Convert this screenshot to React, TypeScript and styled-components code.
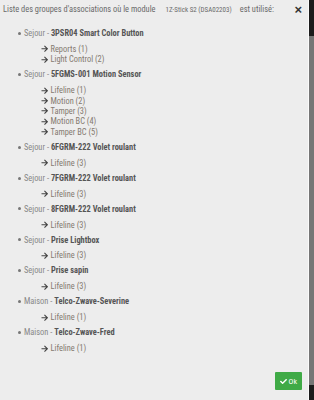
import React from "react";
import styled, { createGlobalStyle } from "styled-components";
import { FaArrowRight, FaCheck } from "react-icons/fa";

const Details = {
    Title: "Liste des groupes d'associations où le module",
    Module: "1Z-Stick S2 (DSA02203)",
    Suffix: "est utilisé:",
    Groups: [
        { Room: "Sejour", Name: "3PSR04 Smart Color Button", Links: ["Reports (1)", "Light Control (2)"] },
        { Room: "Sejour", Name: "5FGMS-001 Motion Sensor", Links: ["Lifeline (1)", "Motion (2)", "Tamper (3)", "Motion BC (4)", "Tamper BC (5)"] },
        { Room: "Sejour", Name: "6FGRM-222 Volet roulant", Links: ["Lifeline (3)"] },
        { Room: "Sejour", Name: "7FGRM-222 Volet roulant", Links: ["Lifeline (3)"] },
        { Room: "Sejour", Name: "8FGRM-222 Volet roulant", Links: ["Lifeline (3)"] },
        { Room: "Sejour", Name: "Prise Lightbox", Links: ["Lifeline (3)"] },
        { Room: "Sejour", Name: "Prise sapin", Links: ["Lifeline (3)"] },
        { Room: "Maison", Name: "Telco-Zwave-Severine", Links: ["Lifeline (1)"] },
        { Room: "Maison", Name: "Telco-Zwave-Fred", Links: ["Lifeline (1)"] },
    ],
};

const GlobalStyle = createGlobalStyle`
    html, body {
        margin: 0;
        padding: 0;
        background: #222;
    }
    body {
        font-family: "Roboto Condensed", "Liberation Sans Narrow", "DejaVu Sans Condensed", Roboto, sans-serif;
    }
`;

const Page = styled.div`
    display: flex;
    flex-direction: row;
    width: 314px;
    height: 400px;
    overflow: hidden;
`;

const Dialog = styled.div`
    flex: 1;
    display: flex;
    flex-direction: column;
    background-color: #ededed;
    border-right: 1px solid #fafafa;
`;

const Header = styled.div`
    display: flex;
    align-items: center;
    padding: 3px 6px 3px 3px;
    height: 12px;
    font-size: 8.4px;
    color: #6a6a6a;
`;

const Title = styled.span`
    white-space: nowrap;
`;

const Module = styled.span`
    font-size: 7px;
    margin: 0 8px 0 10px;
`;

const Close = styled.span`
    margin-left: auto;
    font-family: "Liberation Sans", Arial, sans-serif;
    font-weight: bold;
    font-size: 13px;
    color: #333;
`;

const GroupList = styled.ul`
    flex: 1;
    margin: 10px 0 0 0;
    padding: 0 0 0 18px;
    list-style: none;
    font-size: 8.4px;
    line-height: 10.4px;
    color: #888;
`;

const Group = styled.li``;

const Bullet = styled.span`
    display: inline-block;
    width: 3px;
    height: 3px;
    margin: 0 3px 1px 0;
    border-radius: 50%;
    background-color: #777;
    vertical-align: middle;
`;

const Name = styled.b`
    color: #555;
    font-weight: bold;
`;

const LinkList = styled.ul`
    margin: 5.5px 0 4.6px 0;
    padding: 0 0 0 23px;
    list-style: none;
`;

const LinkItem = styled.li`
    display: flex;
    align-items: center;
    gap: 2px;
    color: #847a70;
    svg {
        color: #444;
        width: 7.5px;
        height: 7.5px;
    }
`;

const Footer = styled.div`
    display: flex;
    justify-content: flex-end;
    padding: 0 6px 10px 0;
`;

const OkButton = styled.button`
    display: flex;
    align-items: center;
    gap: 2px;
    height: 18px;
    padding: 0 5px;
    border: none;
    border-radius: 1px;
    background-color: #3faa46;
    color: #fff;
    font-family: inherit;
    font-size: 8px;
    svg {
        width: 7px;
        height: 7px;
    }
`;

const Scrollbar = styled.div`
    width: 5px;
    display: flex;
    flex-direction: column;
    background-color: #1c1c1c;
`;

const Thumb = styled.div`
    margin: 36px 0 15px 0;
    flex: 1;
    background-color: #767676;
`;

export default function App() {
    return (
        <>
            <GlobalStyle />
            <Page>
                <Dialog>
                    <Header>
                        <Title>
                            {Details.Title}
                            <Module>{Details.Module}</Module>
                            {Details.Suffix}
                        </Title>
                        <Close>×</Close>
                    </Header>
                    <GroupList>
                        {Details.Groups.map((group, index) => (
                            <Group key={index}>
                                <Bullet />
                                {group.Room} - <Name>{group.Name}</Name>
                                <LinkList>
                                    {group.Links.map((link, i) => (
                                        <LinkItem key={i}>
                                            <FaArrowRight />
                                            {link}
                                        </LinkItem>
                                    ))}
                                </LinkList>
                            </Group>
                        ))}
                    </GroupList>
                    <Footer>
                        <OkButton>
                            <FaCheck />
                            Ok
                        </OkButton>
                    </Footer>
                </Dialog>
                <Scrollbar>
                    <Thumb />
                </Scrollbar>
            </Page>
        </>
    );
}
